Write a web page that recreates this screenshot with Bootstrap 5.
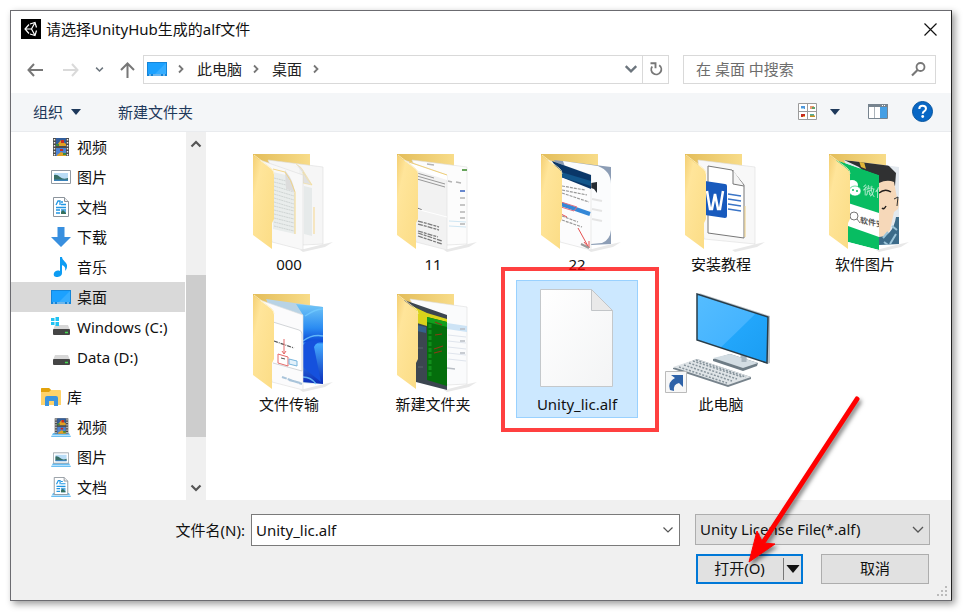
<!DOCTYPE html>
<html lang="zh-CN">
<head>
<meta charset="utf-8">
<meta name="viewport" content="width=device-width, initial-scale=1">
<title>请选择UnityHub生成的alf文件</title>
<link href="https://cdn.jsdelivr.net/npm/bootstrap@5.3.0/dist/css/bootstrap.min.css" rel="stylesheet">
<style>
body{font-family:"Noto Sans","Noto Sans CJK SC",sans-serif;font-size:15px;line-height:24px;color:#111;background:#fff;padding:10px 11px 11px 10px;min-height:100vh}
a,a:hover{color:inherit;text-decoration:none}
svg{display:block;flex:none}
button{color:inherit}
.plain{border:0;background:none;padding:0}
.dialog{height:calc(100vh - 21px);min-height:440px;border:1px solid #6b6b70;border-right-color:#222;box-shadow:3px 3px 7px rgba(0,0,0,.4)}
.titlebar{height:37px;padding:0 14px 0 10px}
.titlebar h1{font-size:15px;line-height:24px;margin-left:5px}
.navrow{height:45px;padding:7px 15px 0 16px}
.arrows{width:116px;padding-bottom:8px}
.box{height:29px;border:1px solid #d9d9d9}
.address{margin-right:14px;color:#222}
.crumbs{padding-left:3px}
.crumbs .sep{margin:0 10px 0 8px}
.refresh{width:26px;border-left:1px solid #d9d9d9}
.search{width:253px}
.search input{min-width:0;font-size:15px;line-height:24px;color:#222}
.search input::placeholder{color:#6d6d6d;opacity:1}
.toolbar{height:39px;background:#f4f6f8;border-bottom:1px solid #e9ebee;color:#1e395b;padding:0 18px 0 22px}
.toolbar .new-folder{margin-left:37px}
.toolbar .more{margin-left:13px}
.browse{min-height:0}
.tree{width:174px;margin-right:1px}
.tree-item{height:30px;padding-left:40px;gap:6px;white-space:nowrap}
.tree-item.root{padding-left:30px;margin-top:10px}
.tree-item.current{background:#d9d9d9}
.scroller{width:20px;background:#f0f0f0}
.scroller .cap{height:20px;margin:2px 0}
.thumb{background:#cdcdcd;flex:162}
.above{flex:119}
.below{flex:39}
.files{display:grid;grid-template-columns:repeat(auto-fill,122px);grid-auto-rows:138px;gap:2px 22px;padding:8px 0 0 22px;align-content:start}
.tile{border:1px solid transparent;text-align:center;position:relative;display:block}
.tile.chosen{background:#cce8ff;border-color:#99d1ff}
.tile span{display:block;white-space:nowrap;line-height:22px}
.frame{position:absolute;inset:-14px -22px -15px -16px;border:4px solid rgba(255,0,0,.75);pointer-events:none}
.bottom{background:#f0f0f0;padding:14px 21px 16px 20px;position:relative;height:100px}
.bottom label{width:214px}
.name-box{height:32px;border:1px solid #7a7a7a;background:#fff;margin:0 15px 0 6px}
.name-box input{font-size:15px;padding:0 4px;color:#111}
.filter{width:235px;height:31px;border:1px solid #adadad;border-radius:0;background-color:#e1e1e1;font-size:15px;line-height:24px;color:#111;padding:0 24px 2px 4px;background-image:url("data:image/svg+xml,%3Csvg xmlns='http://www.w3.org/2000/svg' viewBox='0 0 12 8'%3E%3Cpath d='M1 1l5 5 5-5' fill='none' stroke='%23555' stroke-width='1.3'/%3E%3C/svg%3E");background-size:12px 8px;background-position:right 5px center}
.actions{gap:18px;margin-top:8px;padding-right:1px}
.push{height:30px;width:108px;border:1px solid #adadad;background:#e1e1e1;position:relative;padding:0 0 2px}
.push.primary{border:2px solid #0078d7;width:107px;padding:0}
.push .open{padding:0 2px 2px 0}
.push .split{width:18px;margin:2px 0;border-left:1px solid #777}
.pointer{position:absolute;left:42px;top:-166px;pointer-events:none;filter:drop-shadow(2px 3px 2px rgba(0,0,0,.5))}
.grip{position:absolute;right:3px;bottom:2px}
</style>
<script src="https://cdn.jsdelivr.net/npm/bootstrap@5.3.0/dist/js/bootstrap.bundle.min.js"></script>
</head>
<body>
<svg width="0" height="0" class="position-absolute" aria-hidden="true">
<defs>
<linearGradient id="gFlap" x1="0" y1="0" x2="1" y2="1"><stop offset="0" stop-color="#f4cf73"/><stop offset=".25" stop-color="#ffe59a"/><stop offset="1" stop-color="#fbdc85"/></linearGradient>
<linearGradient id="gBack" x1="0" y1="0" x2="1" y2="0"><stop offset="0" stop-color="#e3bd5a"/><stop offset="1" stop-color="#f8dc89"/></linearGradient>
<linearGradient id="gScreen" x1="0" y1="0" x2="1" y2="1"><stop offset="0" stop-color="#55bdff"/><stop offset=".55" stop-color="#45b4ff"/><stop offset=".56" stop-color="#22a6fb"/><stop offset="1" stop-color="#1b9df2"/></linearGradient>
<linearGradient id="gBloom" x1="0" y1="0" x2="0" y2="1"><stop offset="0" stop-color="#73c7f7"/><stop offset=".3" stop-color="#2b8cf2"/><stop offset=".47" stop-color="#0c4bd8"/><stop offset=".5" stop-color="#45aaff"/><stop offset="1" stop-color="#0a2cb8"/></linearGradient>
<linearGradient id="gPaper" x1="0" y1="0" x2="1" y2="1"><stop offset="0" stop-color="#fff"/><stop offset="1" stop-color="#f3f4f5"/></linearGradient>
<clipPath id="cFront"><path d="M30 19L73 34v75L42 101z"/></clipPath>
<clipPath id="cRear"><path d="M38 19l55 7v77l-20 1z"/></clipPath>
<symbol id="folderBack" viewBox="-1 0 120 112"><path d="M70 109l24-6 9-2-8 5-22 5z" fill="#000" opacity=".09"/><path d="M23 13h57v50H23z" fill="url(#gBack)"/></symbol>
<symbol id="folderFlap" viewBox="-1 0 120 112"><path d="M23 14l17 13q4 3 4 7v44l-2 4v26L23 94z" fill="url(#gFlap)"/><path d="M24 14l17 13q3 2 3 6" fill="none" stroke="#fff0bf" stroke-width=".8"/></symbol>
<symbol id="desktop" viewBox="0 0 20 20"><path d="M0 3h20v14H0z" fill="#1585d8"/><path d="M1 4h18v11H1z" fill="#1ba1ff"/><path d="M19 4v11H8z" fill="#36adff"/><path d="M2 16h2m12 0h2M6 16h8" stroke="#c5e6ff"/></symbol>
<symbol id="video" viewBox="0 0 20 20"><path d="M2 1h16v18H2z" fill="#4b4b4b"/><path d="M5 1h10v8H5z" fill="#315d9c"/><path d="M5 11h10v8H5z" fill="#4c82d2"/><path d="M6 8l4-5 5 4v2H6zM6 18l4-3 5 2v2H6z" fill="#e0a024"/><path d="M10 3h3v3h-3zM9 12h3v2H9z" fill="#c82d22"/><path d="M5 7h3v2H5zM12 16h3v2h-3z" fill="#3e8b3d"/><path d="M3.500 2v17M16.500 2v17" stroke="#eee" stroke-width="1.400" stroke-dasharray="1.500 1.500"/></symbol>
<symbol id="picture" viewBox="0 0 20 20"><path d="M.5 3.500h19v13H.5z" fill="#fff" stroke="#929aa3"/><path d="M3 6h14v8H3z" fill="#b9dcf6"/><path d="M3 8q3-1 6 2t8 1v2H3z" fill="#376e65"/><path d="M3 12.500h14V14H3z" fill="#3b82b9"/></symbol>
<symbol id="document" viewBox="0 0 20 20"><path d="M2.500.5h11l4 4v15h-15z" fill="#fff" stroke="#8c949c"/><path d="M13.500.5v4h4" fill="#eee" stroke="#8c949c"/><path d="M5 8l2-4h2v4M10 5h2M10 7.500h5M5 10.500h10M5 13h4M5 16h4" fill="none" stroke="#2196e3" stroke-width="1.300"/><path d="M10 12h5v5h-5z" fill="#5cace3"/><path d="M10 15l2-2 3 3v1h-5z" fill="#36705c"/></symbol>
<symbol id="download" viewBox="0 0 20 20"><path d="M6.500 0h7v10H20l-10 10L0 10h6.500z" fill="#388fdf"/></symbol>
<symbol id="music" viewBox="0 0 20 20"><path d="M9 0h2c0 4 6 5 5 10q0 2-2 4c1-4-1-5-3-6v8c0 3-3 4-5 4s-4-1-3-4c1-2 3-3 6-2z" fill="#0d9cf3"/></symbol>
<symbol id="drive" viewBox="0 0 20 20"><path d="M4 8h13l2 5H2z" fill="#d7d7d7"/><rect x="2" y="12" width="17" height="6" rx="1" fill="#454545"/><path d="M14 15.500h3" stroke="#46dc54" stroke-width="1.500"/></symbol>
<symbol id="winflag" viewBox="0 0 20 20"><path d="M0 1h3.500v3H0zM4.500 0H8v4H4.500zM0 5h3.500v3H0zM4.500 5H8v4H4.500z" fill="#22c3f3"/></symbol>
<symbol id="library" viewBox="0 0 20 20"><path d="M0 2q0-1 1-1h7l2 2h9q1 0 1 1v14H0z" fill="#ffd36a"/><path d="M0 2q0-1 1-1h7l2 2-2 2H0z" fill="#e2a20b"/><path d="M4 19v-8q0-2 2-2h9q2 0 2 2v8h-4v-5H8v5z" fill="#3b94df"/></symbol>
<symbol id="cradle" viewBox="0 0 20 20"><path d="M2 16h16l2 4H0z" fill="#6cbff2"/><path d="M1 18.500h18" stroke="#b7e1fb"/></symbol>
<symbol id="chevDown" viewBox="0 0 12 12"><path d="M1.500 3.500L6 8l4.500-4.500" fill="none" stroke="currentColor" stroke-width="2"/></symbol>
<symbol id="chevRight" viewBox="0 0 12 12"><path d="M4 2.500L7.500 6 4 9.500" fill="none" stroke="#777" stroke-width="1.800"/></symbol>
<symbol id="caret" viewBox="0 0 10 6"><path d="M0 0h10L5 6z" fill="currentColor"/></symbol>
</defs>
</svg>

<main class="dialog d-flex flex-column bg-white">
<header class="titlebar d-flex align-items-center">
<svg width="20" height="20" viewBox="0 0 20 20"><path d="M0 0h20v20H0z"/><path d="M8 5.500L4 10l4 4.500M4 10h6.500l3-5.500M10.500 10l3 5.500M9 5l5-1.500 1.500 5M9 15l5 1.500 1.500-5" fill="none" stroke="#fff" stroke-width="1.200"/></svg>
<h1 class="fw-normal mb-0 flex-grow-1">请选择UnityHub生成的alf文件</h1>
<button class="plain" aria-label="关闭"><svg width="13" height="13" viewBox="0 0 13 13"><path d="M.5.5l12 12m0-12l-12 12" stroke="#111" stroke-width="1.200"/></svg></button>
</header>

<div class="navrow d-flex">
<div class="arrows d-flex align-items-center">
<button class="plain" aria-label="后退"><svg width="16" height="14" viewBox="0 0 16 14"><path d="M7 1L1.500 7 7 13M1.500 7H16" fill="none" stroke="#777" stroke-width="2"/></svg></button>
<button class="plain ms-auto" aria-label="前进" disabled><svg width="16" height="14" viewBox="0 0 16 14"><path d="M9 1l5.500 6L9 13M14.500 7H0" fill="none" stroke="#dadada" stroke-width="2"/></svg></button>
<button class="plain ms-3 text-secondary" aria-label="最近位置"><svg width="9" height="9"><use href="#chevDown"/></svg></button>
<button class="plain ms-3 me-2" aria-label="上移"><svg width="15" height="16" viewBox="0 0 15 16"><path d="M1 8l6.500-6.500L14 8M7.500 1.500V16" fill="none" stroke="#777" stroke-width="2"/></svg></button>
</div>
<nav class="address box d-flex flex-grow-1 align-items-stretch" aria-label="地址">
<div class="crumbs d-flex align-items-center flex-grow-1">
<svg width="20" height="20"><use href="#desktop"/></svg>
<svg class="sep" width="12" height="12"><use href="#chevRight"/></svg>
<a href="#">此电脑</a>
<svg class="sep" width="12" height="12"><use href="#chevRight"/></svg>
<a href="#">桌面</a>
<svg class="sep" width="12" height="12"><use href="#chevRight"/></svg>
</div>
<button class="plain px-1 text-secondary" aria-label="历史记录"><svg width="14" height="14"><use href="#chevDown"/></svg></button>
<button class="plain refresh d-flex align-items-center justify-content-center" aria-label="刷新"><svg width="14" height="16" viewBox="0 0 14 16"><path d="M3.200 5.500a5 5 0 1 0 7-1.200M1.500 2.200h5v5" fill="none" stroke="#777" stroke-width="1.900"/></svg></button>
</nav>
<div class="search box d-flex align-items-center">
<input class="plain flex-grow-1 ps-2 ms-1" type="search" placeholder="在 桌面 中搜索" aria-label="在 桌面 中搜索">
<button class="plain me-2" aria-label="搜索"><svg width="16" height="16" viewBox="0 0 16 16"><circle cx="9.500" cy="6" r="4" fill="none" stroke="#777" stroke-width="1.800"/><path d="M6.500 9L1 14.500" stroke="#777" stroke-width="2.200"/></svg></button>
</div>
</div>

<div class="toolbar d-flex align-items-center">
<button class="plain d-flex align-items-center gap-2">组织<svg width="10" height="6"><use href="#caret"/></svg></button>
<button class="plain new-folder">新建文件夹</button>
<button class="plain ms-auto" aria-label="更改视图"><svg width="19" height="17" viewBox="0 0 19 17"><path d="M.5.5h18v16H.5zM9.500.5v16M.5 8.500h18" fill="#fff" stroke="#9b9b9b"/><path d="M3 3h4v3H3z" fill="#4f98dc"/><path d="M3 5h3v1H3z" fill="#a3d4ef"/><path d="M12 3h4v3h-4z" fill="#e89a75"/><path d="M14 4h3v2h-3z" fill="#62a26a"/><path d="M3 11h4v3H3z" fill="#c62c1f"/><path d="M5 13h2v1H5z" fill="#f0b13e"/><path d="M12 11h4v2h-4z" fill="#4fae9e"/><path d="M12 12.500h5V14h-5z" fill="#c5901f"/></svg></button>
<button class="plain more" aria-label="更多选项"><svg width="10" height="6"><use href="#caret"/></svg></button>
<button class="plain ms-4 ps-1" aria-label="预览窗格"><svg width="20" height="15" viewBox="0 0 20 15"><path d="M.5.5h19v14H.5z" fill="#fff" stroke="#77848f"/><path d="M0 0h20v3H0z" fill="#77848f"/><path d="M12 3h7v11h-7z" fill="#459fe4"/><path d="M6.500 3v11" stroke="#abb3ba"/><path d="M14 1.500h4" stroke="#fff" stroke-dasharray="1 1"/></svg></button>
<button class="plain ms-4" aria-label="帮助"><svg width="21" height="21" viewBox="0 0 21 21"><circle cx="10.500" cy="10.500" r="10" fill="#0867c5" stroke="#05549f"/><path d="M7.300 8q0-3.200 3.300-3.200T14 7.600q0 1.500-1.600 2.600-1.700 1-1.700 2.500" fill="none" stroke="#fff" stroke-width="2"/><circle cx="10.700" cy="15.500" r="1.400" fill="#fff"/></svg></button>
</div>

<div class="browse d-flex flex-grow-1">
<nav class="tree overflow-hidden flex-shrink-0" aria-label="文件夹">
<a class="tree-item d-flex align-items-center" href="#"><svg width="20" height="20"><use href="#video"/></svg>视频</a>
<a class="tree-item d-flex align-items-center" href="#"><svg width="20" height="20"><use href="#picture"/></svg>图片</a>
<a class="tree-item d-flex align-items-center" href="#"><svg width="20" height="20"><use href="#document"/></svg>文档</a>
<a class="tree-item d-flex align-items-center" href="#"><svg width="20" height="20"><use href="#download"/></svg>下载</a>
<a class="tree-item d-flex align-items-center" href="#"><svg width="20" height="20"><use href="#music"/></svg>音乐</a>
<a class="tree-item current d-flex align-items-center" href="#" aria-current="true"><svg width="20" height="20"><use href="#desktop"/></svg>桌面</a>
<a class="tree-item d-flex align-items-center" href="#"><svg width="20" height="20"><use href="#drive"/><use href="#winflag"/></svg>Windows (C:)</a>
<a class="tree-item d-flex align-items-center" href="#"><svg width="20" height="20"><use href="#drive"/></svg>Data (D:)</a>
<a class="tree-item root d-flex align-items-center" href="#"><svg width="20" height="20"><use href="#library"/></svg>库</a>
<a class="tree-item d-flex align-items-center" href="#"><svg width="20" height="20"><use href="#cradle"/><use href="#video" x="2" y="0" width="17" height="18"/></svg>视频</a>
<a class="tree-item d-flex align-items-center" href="#"><svg width="20" height="20"><use href="#cradle"/><use href="#picture" x="2" y="3" width="16" height="16"/></svg>图片</a>
<a class="tree-item d-flex align-items-center" href="#"><svg width="20" height="20"><use href="#cradle"/><use href="#document" x="1" y="0" width="18" height="18"/></svg>文档</a>
</nav>
<div class="scroller d-flex flex-column flex-shrink-0">
<button class="plain cap d-flex align-items-center justify-content-center" aria-label="向上滚动"><svg width="12" height="12" viewBox="0 0 12 12"><path d="M1.500 8.500L6 4l4.500 4.500" fill="none" stroke="#555" stroke-width="2.200"/></svg></button>
<div class="above"></div><div class="thumb"></div><div class="below"></div>
<button class="plain cap d-flex align-items-center justify-content-center" aria-label="向下滚动"><svg width="12" height="12" viewBox="0 0 12 12"><path d="M1.500 3.500L6 8l4.500-4.500" fill="none" stroke="#555" stroke-width="2.200"/></svg></button>
</div>

<section class="files flex-grow-1" aria-label="文件">
<a class="tile" href="#"><svg width="120" height="112" viewBox="-1 0 120 112"><use href="#folderBack" x="-1" width="120" height="112"/>
<path d="M38 19l55 7v77l-20 1z" fill="#f6f6f6" stroke="#ddd" stroke-width=".6"/><path d="M62 24q8 2 10 6l10 14-9-1v55h-4V27z" fill="#f1f2f2"/><path d="M74 45l8 2v48l-8-2z" fill="#e6eaea"/><path d="M73 31q4 8 9 13l-9-2zM66 23q6 3 8 8l8 13" fill="#e1e1e1" stroke="#f5dd95" stroke-width=".6"/><path d="M84 66v27" stroke="#f6d68b"/>
<path d="M30 19L73 34v75L42 101z" fill="#f8f8f8" stroke="#ddd" stroke-width=".6"/><path d="M43 31l13 3v14l9 4v41l-22-5z" fill="#e9edec"/><path d="M44 37l12 3m-12 1l12 3m-12 1l20 6m-20-2l20 6m-20-2l20 6m-20-2l20 6m-20-2l20 6m-20-2l20 5m-20-1l20 5m-20-1l20 5m-20-1l20 5m-20-1l20 5m-20-1l20 5" stroke="#c8cecd" stroke-width=".8" stroke-dasharray="2 .5"/><path d="M55 29l1 19 9 3q-2-12-8-19z" fill="#dcdcdc"/><path d="M43 28l12 3q6 7 10 20v42" fill="none" stroke="#f2d27e" stroke-width=".9"/>
<use href="#folderFlap" x="-1" width="120" height="112"/></svg><span>000</span></a>

<a class="tile" href="#"><svg width="120" height="112" viewBox="-1 0 120 112"><use href="#folderBack" x="-1" width="120" height="112"/>
<path d="M38 19l55 7v77l-20 1z" fill="#fcfcfc" stroke="#ddd" stroke-width=".6"/><path d="M53 23l7 1m14 16l4 1m4 0l5 1M86 57h5M86 64h5m-5 7h5m-5 6h5m-5 6h5" stroke="#b4b4b4" stroke-width="1.500"/><path d="M86 50h5" stroke="#6888ce" stroke-width="2"/><path d="M88 29h5" stroke="#67a45b" stroke-width="2"/><path d="M75 80l17 1m-17 4l17 1" stroke="#cfe6f3"/>
<path d="M30 19L73 34v75L42 101z" fill="#f2f2f2" stroke="#ddd" stroke-width=".6"/><path d="M36 22l37 12v5L42 29z" fill="#fff"/><path d="M35 21l38 13" stroke="#efcf78"/><path d="M43 32l17 5m-17-2l28 8m-28-5l28 8" stroke="#999" stroke-width="1"/><path d="M43 67l5 2M44 80l21 6m-21-3l21 6m-21 1l20 6m-20-4l24 8m-24-5l24 8" stroke="#7a7a7a" stroke-width="1.300" stroke-dasharray="5 1 3 1"/><path d="M42 68l31 8" stroke="#fff"/>
<use href="#folderFlap" x="-1" width="120" height="112"/></svg><span>11</span></a>

<a class="tile" href="#"><svg width="120" height="112" viewBox="-1 0 120 112"><use href="#folderBack" x="-1" width="120" height="112"/>
<path d="M36 19l57 7v77l-20 1z" fill="#8c9db5"/><path d="M45 20l35 5q13 5 13 18v46q-1 10-9 13l-11 1z" fill="#fbfcfd"/><path d="M73 42l6-1v11l-3-4-3-1z" fill="#252c32"/><path d="M74 58l10 2m-10 8l10 2m-10 8l10 2" stroke="#e4e4e4" stroke-width="2"/>
<path d="M30 19L73 34v75L42 101z" fill="#fcfcfd" stroke="#ddd" stroke-width=".6"/><path d="M34 20l39 14v14L43 36z" fill="#0a3768"/><path d="M43 31l30 9v5L43 36z" fill="#12568b"/><path d="M44 45l23 4m-23 0l25 5m-25-2l27 9M44 75l16 6m-16-2l20 7" stroke="#999" stroke-width="1.200" stroke-dasharray="3 1"/><path d="M43 63l29 10" stroke="#3487d7" stroke-width="4"/><path d="M43 61l16 5-3 4-13-4" fill="none" stroke="#df6f7e"/><path d="M43 73l6 3M60 87l11 20m-5-6l5 6v-7" fill="none" stroke="#e65151"/><path d="M63 103l8 4" stroke="#999" stroke-width="2"/>
<use href="#folderFlap" x="-1" width="120" height="112"/></svg><span>22</span></a>

<a class="tile" href="#"><svg width="120" height="112" viewBox="-1 0 120 112"><use href="#folderBack" x="-1" width="120" height="112"/>
<path d="M36 19l57 7v77L42 98z" fill="#f8f8f8" stroke="#ddd" stroke-width=".6"/><path d="M46 25l24 4 12 15v53l-36-5z" fill="#fff" stroke="#777"/><path d="M71 29v14l11 2" fill="#f5f5f5" stroke="#777"/><path d="M83 65v31" stroke="#edcf83"/><path d="M66 53l13 2m-13 3l13 2m-13 3l13 2m-13 3l13 2" stroke="#3b75c7" stroke-width="1.500"/><path d="M43 40l20 3q2 0 2 2v30q0 2-2 2l-20-3z" fill="#185abd"/><path d="M45 50l3 18h2l3-15 3 15h2l3-18" fill="none" stroke="#fff" stroke-width="2.500"/>
<use href="#folderFlap" x="-1" width="120" height="112"/></svg><span>安装教程</span></a>

<a class="tile" href="#"><svg width="120" height="112" viewBox="-1 0 120 112"><use href="#folderBack" x="-1" width="120" height="112"/>
<g clip-path="url(#cRear)"><path d="M36 15h60v92H36z" fill="#e3e9ef"/><path d="M38 19l42 3 10 10-1 13-7-3-9 4-20-20z" fill="#303132"/><path d="M53 20l5 1 2 7-5-2z" fill="#dfb438"/><path d="M73 42q8-4 15-1l3 16 3 2-2 9-4 3-4 18-11 13z" fill="#f6d8b9"/><path d="M73 52q6-5 12-1M76 67q2 2 4-2" fill="none" stroke="#25201e" stroke-width="1.500"/><path d="M73 96q14-1 17-20h4v30H73z" fill="#3c6b89"/><path d="M77 97l5-6m2 12l6-10m-12 8l4 3m4-19l5 4" stroke="#9bc4d9" stroke-width="2"/><path d="M88 58l4-2-1 9" fill="none" stroke="#333"/></g>
<g clip-path="url(#cFront)"><path d="M30 19L73 34v75L42 101z" fill="#08bd62"/><path d="M42 62l31 10v24L42 85z" fill="#fff"/><ellipse cx="46" cy="44" rx="6" ry="5" fill="#fff"/><ellipse cx="49" cy="50" rx="6" ry="5" fill="#fff" stroke="#08bd62" stroke-width=".6"/><circle cx="47" cy="49" r="1" fill="#08bd62"/><circle cx="51" cy="50" r="1" fill="#08bd62"/><circle cx="48" cy="75" r="4" fill="none" stroke="#777"/><path d="M51 78l3 4" stroke="#777"/><text transform="matrix(1 .2 0 1 57 53)" font-size="12" fill="#fff" opacity=".7">微信</text><text transform="matrix(1 .2 0 1 54 82)" font-size="8" font-weight="700" fill="#555">软件安</text></g>
<use href="#folderFlap" x="-1" width="120" height="112"/></svg><span>软件图片</span></a>

<a class="tile" href="#"><svg width="120" height="112" viewBox="-1 0 120 112"><use href="#folderBack" x="-1" width="120" height="112"/>
<path d="M36 18l57 8v77l-20-1z" fill="#b8d3e5"/><path d="M66 23l27 3v77l-20-2V34z" fill="url(#gBloom)"/><path d="M73 64q5-7 20-4-7 1-9 6l7 35q-10-8-18-15z" fill="#1551dd"/><path d="M73 60q9-7 20-5M73 96q8 0 13 7M75 35q12-8 18-7" fill="none" stroke="#73caff" stroke-width="1.500" opacity=".8"/>
<path d="M30 19L73 34v75L42 101z" fill="#fbfbfc" stroke="#ddd" stroke-width=".6"/><path d="M43 41l26 8q3 1 3 4v37l-29-8" fill="#fff" stroke="#d2d5d8"/><path d="M44 60l20 7" stroke="#555" stroke-width="1.200" stroke-dasharray="4 1 1 1"/><path d="M54 58v15m-2-3l2 3 2-3M48 73l10 3v9l-10-3z" fill="none" stroke="#e56b6b"/><path d="M59 78l8 2v5l-8-2z" fill="#e2f1fb" stroke="#77b5dc"/><path d="M51 77l4 1" stroke="#555"/><path d="M52 96l20 7m-13-4l12 3" stroke="#a9c4da" stroke-width="2" stroke-dasharray="5 1"/>
<use href="#folderFlap" x="-1" width="120" height="112"/></svg><span>文件传输</span></a>

<a class="tile" href="#"><svg width="120" height="112" viewBox="-1 0 120 112"><use href="#folderBack" x="-1" width="120" height="112"/>
<path d="M36 18l57 8v77l-20 1z" fill="#fafbfc" stroke="#ddd" stroke-width=".6"/><path d="M73 42l20 3v6l-20-3z" fill="#cde3f5"/><path d="M74 54l18 2m-18 4l18 2m-18 4l18 2m-18 4l18 2m-18 4l18 2" stroke="#e0e5ed"/><path d="M73 87l8 1M86 48h5M86 60h5M86 72h5" stroke="#b8bdc4" stroke-width="1.300"/>
<path d="M30 19L73 34v75L42 101z" fill="#3c4650"/><path d="M38 25l15 7v13l-10-3V32z" fill="#d9d31b"/><path d="M53 32l20 6v5l-20-6z" fill="#d9d31b"/><path d="M43 44l9 2v6l-9-2z" fill="#35618b"/><path d="M53 36l20 5v64l-20-6z" fill="#046e0c"/><path d="M53 36l20 5v5l-20-5z" fill="#129e1e"/><path d="M56 43v53" stroke="#128f1c" stroke-width="3" stroke-dasharray="4 2"/><path d="M44 67h5m-5 19h5" stroke="#59636c"/><path d="M61 54l7-1m-8 15l9-3m-9 7l8-2M61 41l7 3" stroke="#8b3a18" stroke-width="1.200"/>
<use href="#folderFlap" x="-1" width="120" height="112"/></svg><span>新建文件夹</span></a>

<a class="tile chosen" href="#" aria-current="true"><svg width="120" height="112" viewBox="-1 0 120 112"><path d="M22.500 8.500h51l21 21v76h-72z" fill="url(#gPaper)" stroke="#c4c8cb"/><path d="M73.500 8.500l21 21h-21z" fill="#e9e9e9" stroke="#c2c5c8"/></svg><span>Unity_lic.alf</span><i class="frame"></i></a>

<a class="tile" href="#"><svg width="120" height="112" viewBox="-1 0 120 112">
<path d="M80 72v11M83 72v10" stroke="#aeb9c1" stroke-width="3"/><path d="M51 78l17-5 28 9-1 3-14 5-30-10z" fill="#6e7c85"/><path d="M51 77l17-4 28 9-15 5z" fill="#d3dde3"/><path d="M82 73v8" stroke="#a8b5be" stroke-width="5"/>
<path d="M37 12l71 23v47l-3 1z" fill="#b8c1c7"/><path d="M35 13l71 23-1 46-70-23z" fill="url(#gScreen)" stroke="#293c48" stroke-width="1.500"/>
<path d="M11 87l24-9 54 18v2l-23 8-55-18z" fill="#77838c"/><path d="M11 86l24-8 54 18-23 8z" fill="#dfe4e7"/><path d="M17 86l48 16M22 84l48 16M27 82l48 16M31 80l49 16M34 79l50 17" stroke="#87949c" stroke-width="1.500" stroke-dasharray="2 1.500"/>
<path d="M3.500 90.500h21v21h-21z" fill="#f7f7f7" stroke="#bbb"/><path d="M8 109q-3-8 5-12l-4-3h12v12l-4-4q-6 1-5 8z" fill="#2e62a8"/></svg><span>此电脑</span></a>
</section>
</div>

<footer class="bottom">
<div class="d-flex align-items-start">
<label class="ms-auto text-end pt-1 flex-shrink-0" for="fname">文件名(N):</label>
<div class="name-box d-flex flex-grow-1 align-items-center">
<input id="fname" class="plain flex-grow-1" type="text" value="Unity_lic.alf">
<button class="plain px-1 text-secondary" aria-label="文件名列表"><svg width="14" height="12" viewBox="0 0 12 12"><path d="M1.500 3.500L6 8l4.500-4.500" fill="none" stroke="#555" stroke-width="1.200"/></svg></button>
</div>
<select class="form-select filter flex-shrink-0" aria-label="文件类型"><option>Unity License File(*.alf)</option></select>
</div>
<div class="actions d-flex justify-content-end">
<div class="push primary d-flex">
<button class="plain open flex-grow-1">打开(O)</button>
<button class="plain split d-flex align-items-center justify-content-center" aria-label="打开选项"><svg width="14" height="8" viewBox="0 0 10 6"><use href="#caret"/></svg></button>
<svg class="pointer" width="130" height="180" viewBox="0 0 130 180"><path d="M117 9L24 151" stroke="#f00" stroke-width="5" stroke-linecap="round"/><path d="M9 172l8-31 6 12 12 1z" fill="#f00" stroke="#f00"/></svg>
</div>
<button class="push">取消</button>
</div>
<svg class="grip" width="12" height="12" viewBox="0 0 12 12"><path d="M9 0h2v2H9zM5 4h2v2H5zM9 4h2v2H9zM1 8h2v2H1zM5 8h2v2H5zM9 8h2v2H9z" fill="#bbb"/></svg>
</footer>
</main>
</body>
</html>
